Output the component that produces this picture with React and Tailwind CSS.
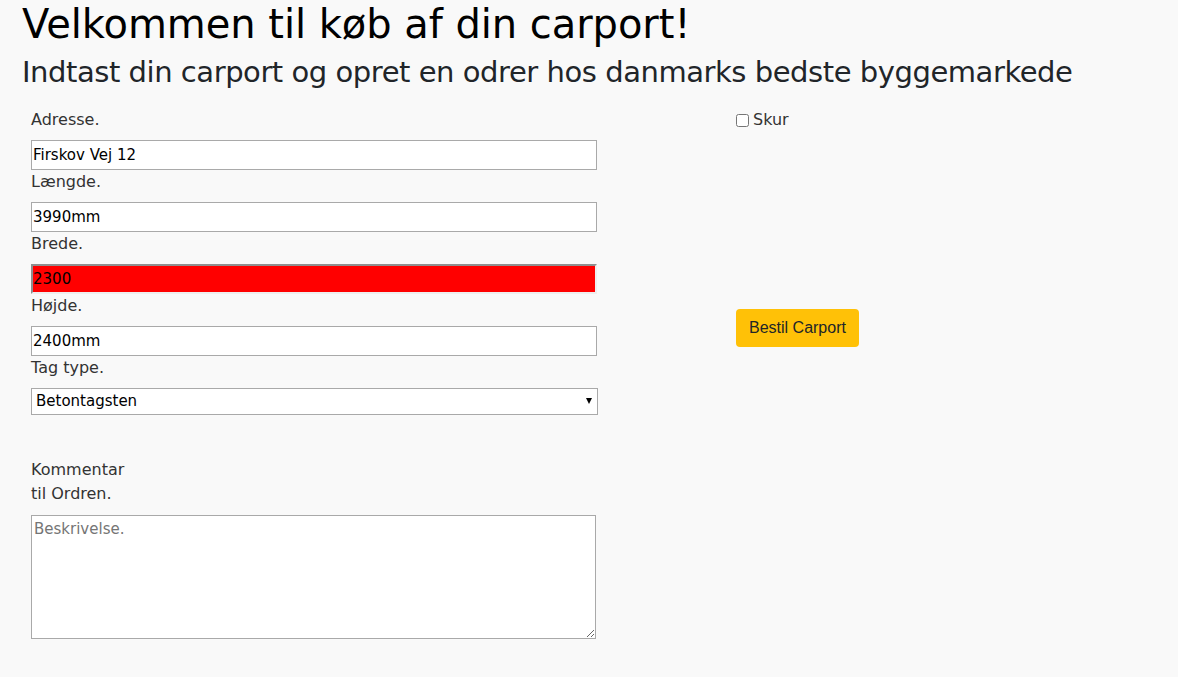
export default function App() {
  const label = "block text-[16px] leading-[24px] text-[#333333] mb-[8px]";
  const input =
    "block w-[566px] h-[30px] border border-[#a9a9a9] bg-white px-[1px] text-[15px] text-black outline-none font-['DejaVu_Sans',sans-serif]";
  return (
    <div className="min-h-screen w-full bg-[#f9f9f9] font-['DejaVu_Sans',sans-serif] pb-[38px]">
      <div className="pl-[22px]">
        <h1 className="text-[40px] leading-[48px] text-black m-0 mb-[5px] whitespace-nowrap tracking-[-0.05px]">
          Velkommen til køb af din carport!
        </h1>
        <h2 className="text-[29px] leading-[38px] text-[#212529] m-0 mt-[1px] whitespace-nowrap tracking-[-0.45px]">
          Indtast din carport og opret en odrer hos danmarks bedste byggemarkede
        </h2>
      </div>
      <div className="flex pl-[31px] mt-[17px]">
        <div className="w-[566px] flex flex-col">
          <label className={label}>Adresse.</label>
          <input className={input} defaultValue="Firskov Vej 12" />
          <label className={label}>Længde.</label>
          <input className={input} defaultValue="3990mm" />
          <label className={label}>Brede.</label>
          <input
            className="block w-[566px] h-[30px] border-2 border-t-[#8f8f8f] border-l-[#8f8f8f] border-r-[#eeeeee] border-b-[#eeeeee] bg-[#ff0000] px-0 text-[15px] text-black outline-none font-['DejaVu_Sans',sans-serif]"
            defaultValue="2300"
          />
          <label className={label}>Højde.</label>
          <input className={input} defaultValue="2400mm" />
          <label className={label}>Tag type.</label>
          <div className="relative w-[567px] h-[27px]">
            <select className="block appearance-none w-[567px] h-[27px] border border-[#a9a9a9] bg-white pl-[4px] text-[15px] text-black outline-none font-['DejaVu_Sans',sans-serif]">
              <option>Betontagsten</option>
            </select>
            <span className="pointer-events-none absolute right-[6px] top-[10px] w-0 h-0 border-l-[3px] border-r-[3px] border-t-[6px] border-l-transparent border-r-transparent border-t-black"></span>
          </div>
          <label className={label + " mt-[43px]"}>
            Kommentar
            <br />
            til Ordren.
          </label>
          <textarea
            className="block w-[565px] h-[124px] mt-[1px] border border-[#a9a9a9] bg-white px-[2px] py-[2px] text-[15px] text-black placeholder:text-[#757575] outline-none font-['DejaVu_Sans',sans-serif]"
            placeholder="Beskrivelse."
          />
        </div>
        <div className="ml-[139px] flex flex-col items-start">
          <div className="flex items-center h-[24px] gap-[4px] text-[16px] text-[#333333]">
            <input type="checkbox" className="w-[13px] h-[13px] m-0" />
            <span>Skur</span>
          </div>
          <button className="mt-[177px] bg-[#ffc107] rounded-[4px] px-[13px] py-[7px] text-[16px] leading-[24px] text-[#212529] font-['Liberation_Sans',Arial,sans-serif]">
            Bestil Carport
          </button>
        </div>
      </div>
    </div>
  );
}
